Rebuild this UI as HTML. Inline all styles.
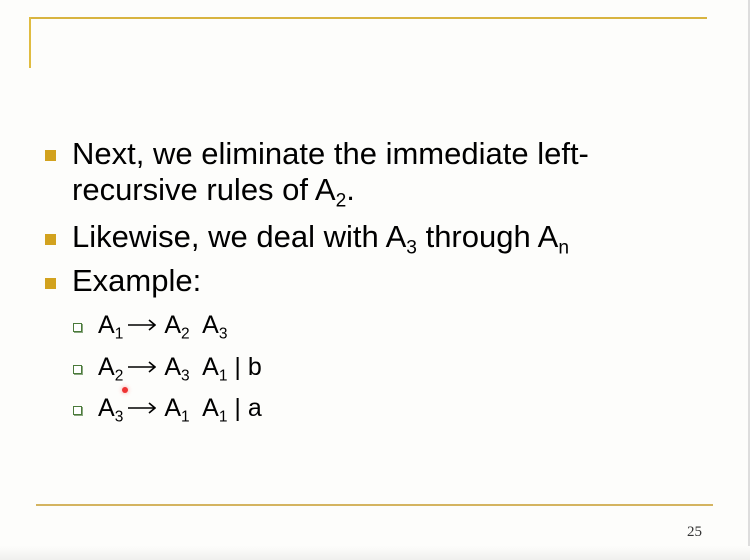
<!DOCTYPE html>
<html><head><style>
body{margin:0;width:750px;height:560px;background:#fdfdfb;position:relative;overflow:hidden;font-family:"Liberation Sans",Arial,sans-serif;color:#000}
.a{position:absolute;white-space:nowrap}
.t{font-size:31px;left:72px}
.s{font-size:25px;left:98px}
.b{position:absolute;width:11px;height:11px;background:#d2a21e}
.sb{position:absolute;width:7px;height:7px;border:1.5px solid #4a7a3a;background:#fff;box-shadow:1px 1px 0 #8aa880}
sub{font-size:62%;vertical-align:-0.35em;line-height:0}
.ar{display:inline-block;width:28px;height:12px;margin:0 8px 0 5px;vertical-align:2px}
</style></head><body>
<div style="position:absolute;left:29px;top:17px;width:678px;height:2px;background:#d8b440"></div>
<div style="position:absolute;left:29px;top:17px;width:2px;height:51px;background:#e0bc40"></div>
<div style="position:absolute;left:36px;top:504px;width:677px;height:2px;background:#d4b460"></div>
<div class="a" style="left:687px;top:524px;font-family:'Liberation Serif',serif;font-size:15px;color:#333">25</div>
<div style="position:absolute;right:0;top:0;width:2px;height:560px;background:#ddd"></div>
<div style="position:absolute;left:0;bottom:0;width:750px;height:14px;background:linear-gradient(#fdfdfb,#f0f0ee)"></div>

<div class="b" style="left:45px;top:150px"></div>
<div class="a t" style="top:136px">Next, we eliminate the immediate left-</div>
<div class="a t" style="top:172px">recursive rules of A<sub>2</sub>.</div>
<div class="b" style="left:45px;top:234px"></div>
<div class="a t" style="top:219px">Likewise, we deal with A<sub>3</sub> through A<sub>n</sub></div>
<div class="b" style="left:45px;top:278px"></div>
<div class="a t" style="top:263px">Example:</div>

<div class="sb" style="left:73px;top:323px"></div>
<div class="a s" style="top:311px">A<sub>1</sub><svg class="ar" viewBox="0 0 28 12"><path d="M0 6H27M21 1L27 6L21 11" fill="none" stroke="#000" stroke-width="1.6"/></svg>A<sub>2</sub>&nbsp; A<sub>3</sub></div>
<div class="sb" style="left:73px;top:365px"></div>
<div class="a s" style="top:353px">A<sub>2</sub><svg class="ar" viewBox="0 0 28 12"><path d="M0 6H27M21 1L27 6L21 11" fill="none" stroke="#000" stroke-width="1.6"/></svg>A<sub>3</sub>&nbsp; A<sub>1</sub> | b</div>
<div class="sb" style="left:73px;top:406px"></div>
<div class="a s" style="top:394px">A<sub>3</sub><svg class="ar" viewBox="0 0 28 12"><path d="M0 6H27M21 1L27 6L21 11" fill="none" stroke="#000" stroke-width="1.6"/></svg>A<sub>1</sub>&nbsp; A<sub>1</sub> | a</div>
<div style="position:absolute;left:122px;top:387px;width:6px;height:6px;border-radius:50%;background:#e33;box-shadow:0 0 4px #f99"></div>
</body></html>
